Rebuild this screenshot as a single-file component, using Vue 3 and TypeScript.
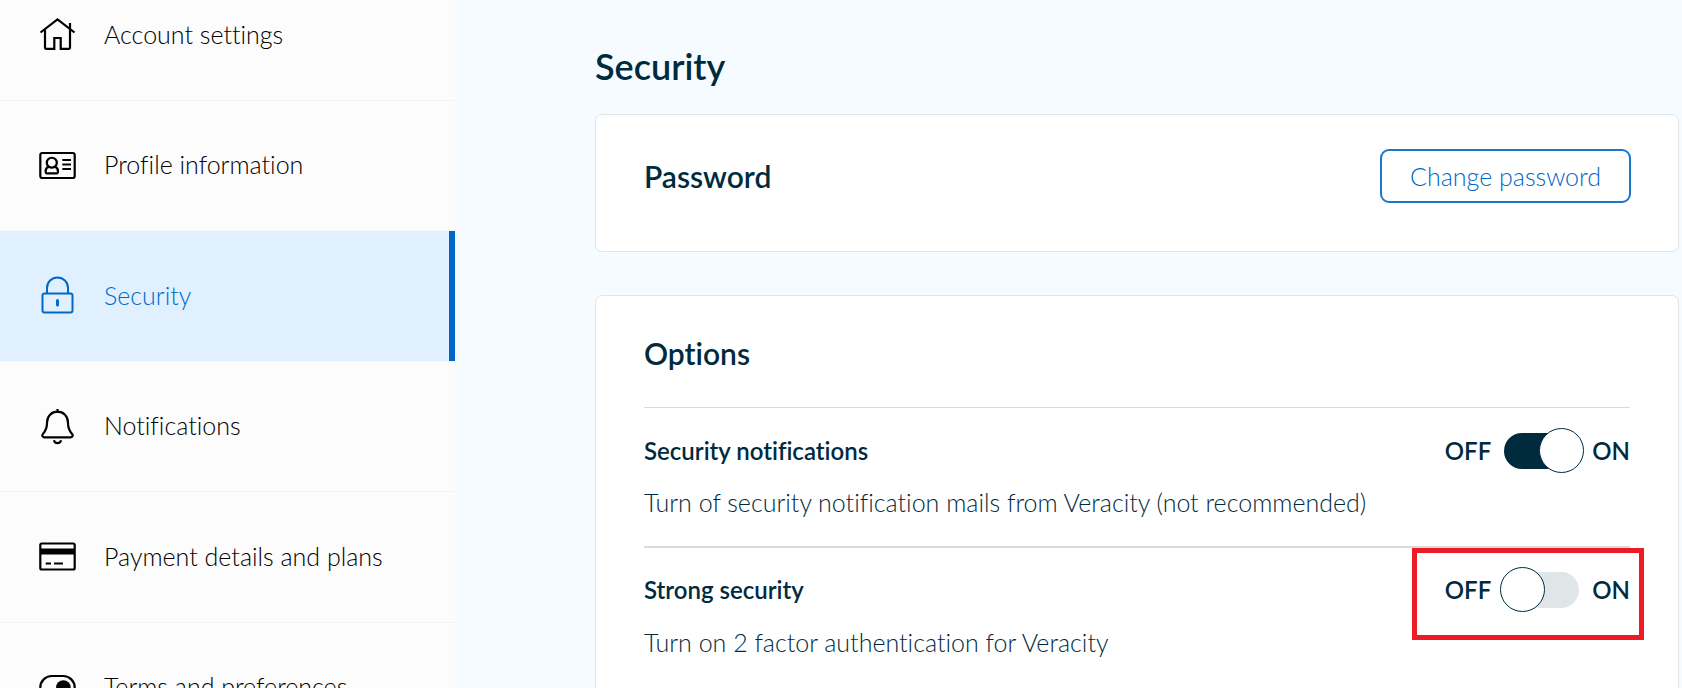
<script setup lang="ts">
import { ref } from 'vue'

interface NavItem {
  id: string
  label: string
}

interface Setting {
  id: string
  title: string
  description: string
  enabled: boolean
  marked: boolean
}

const navItems: NavItem[] = [
  { id: 'account', label: 'Account settings' },
  { id: 'profile', label: 'Profile information' },
  { id: 'security', label: 'Security' },
  { id: 'notifications', label: 'Notifications' },
  { id: 'payment', label: 'Payment details and plans' },
  { id: 'terms', label: 'Terms and preferences' },
]

const activeId = ref('security')

const settings = ref<Setting[]>([
  {
    id: 'security-notifications',
    title: 'Security notifications',
    description: 'Turn of security notification mails from Veracity (not recommended)',
    enabled: true,
    marked: false,
  },
  {
    id: 'strong-security',
    title: 'Strong security',
    description: 'Turn on 2 factor authentication for Veracity',
    enabled: false,
    marked: true,
  },
])
</script>

<template>
  <div class="page">
    <nav class="sidebar" aria-label="Settings">
      <a
        v-for="item in navItems"
        :key="item.id"
        href="#"
        class="nav-item"
        :class="{ active: item.id === activeId }"
        :aria-current="item.id === activeId ? 'page' : undefined"
        @click.prevent="activeId = item.id"
      >
        <svg class="nav-icon" viewBox="0 0 39 39" aria-hidden="true">
          <g v-if="item.id === 'account'">
            <path d="M2.5 17.5 19.5 4.3l17 13.2" />
            <path d="M7 14.5V32.8a1 1 0 0 0 1 1h8.3V23h6.4v10.8H31a1 1 0 0 0 1-1V8" />
          </g>
          <g v-else-if="item.id === 'profile'">
            <rect x="2.3" y="7" width="34.4" height="25" rx="2" />
            <path d="M10.6 20.6a5 5 0 1 1 6.4 0" />
            <path d="M10.8 20.6c-2 .7-3.2 2.5-3.2 4.8 0 1.5.6 2 2 2h8.4c1.4 0 2-.5 2-2 0-2.3-1.2-4.1-3.2-4.800-1.800 1.200-4.200 1.200-6 0Z" />
            <path d="M24.3 14H33M24.3 18.5H33M24.3 23H33" />
          </g>
          <g v-else-if="item.id === 'security'" class="light">
            <rect x="4.5" y="17.500" width="30" height="19" rx="2" />
            <path d="M9 17.500V12a10.500 10.500 0 0 1 21 0v5.500" />
            <path class="keyhole" d="M19.500 24.500v4.500" />
          </g>
          <g v-else-if="item.id === 'notifications'">
            <path d="M19.5 2v2.500" />
            <path d="M19.5 4.700c-6 0-10.400 4.500-10.400 10.300 0 6-1 8.300-4 11.800-1.500 1.800-.8 3.500 1.200 3.500h26.400c2 0 2.700-1.700 1.200-3.500-3-3.500-4-5.800-4-11.800 0-5.800-4.400-10.300-10.400-10.300Z" />
            <path d="M15.900 33.300a3.700 3.700 0 0 0 7.200 0" />
          </g>
          <g v-else-if="item.id === 'payment'">
            <rect x="2.3" y="6.500" width="34.400" height="26" rx="1.500" />
            <rect class="solid" x="2" y="11.500" width="35" height="6" />
            <path d="M7.700 26.500H13M16 26.500h9" />
          </g>
          <g v-else>
            <rect x="2.3" y="8" width="34.400" height="23" rx="11.500" />
            <circle class="solid" cx="25.400" cy="19.500" r="7.300" />
          </g>
        </svg>
        <span class="nav-label">{{ item.label }}</span>
      </a>
    </nav>

    <main class="content">
      <h1>Security</h1>

      <section class="card password-card">
        <h2>Password</h2>
        <button type="button" class="outline-button">Change password</button>
      </section>

      <section class="card options-card">
        <h2>Options</h2>
        <div v-for="setting in settings" :key="setting.id" class="setting">
          <div class="setting-head">
            <h3 :id="setting.id + '-title'">{{ setting.title }}</h3>
            <label class="switch" :class="{ marked: setting.marked }">
              <span>OFF</span>
              <input
                v-model="setting.enabled"
                type="checkbox"
                role="switch"
                :aria-labelledby="setting.id + '-title'"
              />
              <span>ON</span>
            </label>
          </div>
          <p>{{ setting.description }}</p>
        </div>
      </section>
    </main>
  </div>
</template>

<style>
body {
  background: #f6fbff;
}
</style>

<style scoped>
.page {
  display: flex;
  height: 100vh;
  overflow: hidden;
  background: #f6fbff;
  color: #002b3e;
  font-family: Lato, "Open Sans", sans-serif;
  font-size: 25px;
  font-weight: 300;
  line-height: 32px;
  font-variant-ligatures: none;
}

h1,
h2,
h3,
p {
  margin: 0;
}

h1,
h2,
h3 {
  font-weight: 600;
}

.sidebar {
  display: grid;
  flex: 0 0 455px;
  grid-template-rows: repeat(6, 1fr);
  height: 783px;
  margin-top: -30px;
  background: #fcfcfc;
}

.nav-item {
  display: flex;
  align-items: center;
  gap: 27px;
  padding-left: 38px;
  border-bottom: 1px solid #f3f4f4;
  color: #000;
  text-decoration: none;
}

.nav-item.active {
  background: #e0f0ff;
  box-shadow: inset -6px 0 #0068c8;
  color: #0068c8;
}

.nav-icon {
  flex: none;
  width: 39px;
  height: 39px;
  fill: none;
  stroke: currentColor;
  stroke-width: 2.2;
}

.nav-icon .light {
  stroke-width: 2;
}

.nav-icon .keyhole {
  stroke-width: 3;
  stroke-linecap: round;
}

.nav-icon .solid {
  fill: currentColor;
  stroke: none;
}

.nav-label {
  padding-bottom: 2px;
}

.content {
  flex: 1;
  min-width: 0;
  padding: 44px 3px 0 140px;
}

h1 {
  margin-bottom: 26px;
  font-size: 36px;
  line-height: 44px;
}

h2 {
  font-size: 30px;
  line-height: 40px;
}

h3 {
  font-size: 24px;
}

.card {
  border: 1px solid #e0e5e8;
  border-radius: 7px;
  background: #fff;
}

.password-card {
  display: flex;
  align-items: center;
  justify-content: space-between;
  margin-bottom: 43px;
  padding: 34px 47px 48px 48px;
}

.outline-button {
  height: 54px;
  padding: 0 28px;
  border: 2px solid #1a77cc;
  border-radius: 9px;
  background: #fff;
  color: #0068c8;
  font: inherit;
  font-variant-ligatures: none;
}

.options-card {
  padding: 37px 48px 60px;
}

.options-card h2 {
  margin-bottom: 34px;
}

.setting {
  padding: 20px 0 28px;
  border-top: 1px solid #d9dadb;
}

.setting + .setting {
  padding-top: 19px;
  border-top-width: 2px;
}

.setting-head {
  display: flex;
  align-items: center;
  justify-content: space-between;
  height: 45px;
  margin-bottom: 13px;
}

.setting + .setting .setting-head {
  margin-bottom: 14px;
}

.switch {
  position: relative;
  display: flex;
  align-items: center;
  gap: 13px;
  height: 100%;
  font-size: 24px;
  font-weight: 600;
}

.switch input {
  position: relative;
  width: 75px;
  height: 36px;
  margin: 0;
  border-radius: 18px;
  background: #e0e5e8;
  appearance: none;
}

.switch input::before {
  content: "";
  position: absolute;
  top: -5px;
  left: -4px;
  box-sizing: border-box;
  width: 45px;
  height: 45px;
  border: 1px solid #002b3e;
  border-radius: 50%;
  background: #fff;
}

.switch input:checked {
  background: #002b3e;
}

.switch input:checked::before {
  left: 35px;
}

.switch.marked::after {
  content: "";
  position: absolute;
  inset: -19px -14px -28px -33px;
  border: 5px solid #ed1c24;
  pointer-events: none;
}
</style>
